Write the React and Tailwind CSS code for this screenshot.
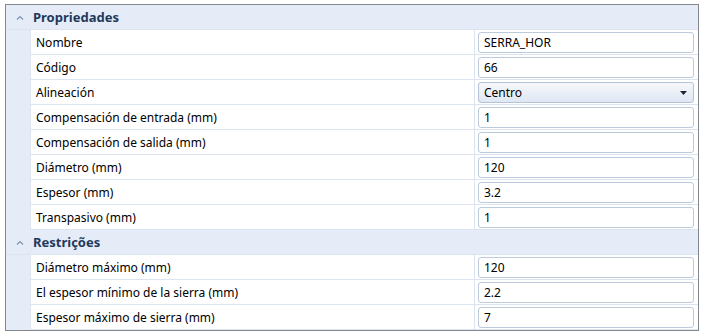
import React from "react";

const sections = [
  {
    title: "Propriedades",
    rows: [
      { label: "Nombre", value: "SERRA_HOR" },
      { label: "Código", value: "66" },
      { label: "Alineación", value: "Centro", select: true },
      { label: "Compensación de entrada (mm)", value: "1" },
      { label: "Compensación de salida (mm)", value: "1" },
      { label: "Diámetro (mm)", value: "120" },
      { label: "Espesor (mm)", value: "3.2" },
      { label: "Transpasivo (mm)", value: "1" },
    ],
  },
  {
    title: "Restrições",
    rows: [
      { label: "Diámetro máximo (mm)", value: "120" },
      { label: "El espesor mínimo de la sierra (mm)", value: "2.2" },
      { label: "Espesor máximo de sierra (mm)", value: "7" },
    ],
  },
];

const Chevron = () => (
  <svg width="8" height="5" viewBox="0 0 8 5" className="block">
    <polyline points="1,4.5 4,1.5 7,4.5" fill="none" stroke="#7f93ad" strokeWidth="1.2" />
  </svg>
);

const Row = ({ label, value, select }) => (
  <div className="flex h-[25px]">
    <div className="w-[24px] shrink-0 bg-[#e5ecf8]" />
    <div className="flex flex-1 border-l border-b border-[#dbe4f0] bg-white">
      <div className="w-[444px] shrink-0 border-r border-[#dbe4f0] pl-[5px] pt-[2px] flex items-center text-black">
        {label}
      </div>
      <div className="flex-1 flex items-center pl-[3px] pr-[4px]">
        {select ? (
          <div className="h-[21px] w-full rounded-[3px] border border-[#b4c3d7] bg-gradient-to-b from-[#f6f8fb] to-[#dfe7f3] flex items-center justify-between pl-[5px] pr-[6px] pt-[1px] text-black">
            <span>{value}</span>
            <svg width="7" height="4" viewBox="0 0 7 4">
              <polygon points="0,0 7,0 3.5,4" fill="#1a2536" />
            </svg>
          </div>
        ) : (
          <div className="h-[21px] w-full rounded-[3px] border border-[#bccadb] bg-white flex items-center pl-[5px] pt-[1px] text-black">
            {value}
          </div>
        )}
      </div>
    </div>
  </div>
);

const App = () => {
  return (
    <div className="w-[703px] h-[336px] bg-white pt-[4px] pl-[5px] text-[12px] font-['Segoe_UI','Noto_Sans',sans-serif]">
      <div className="w-[694px] border border-[#828790] bg-white">
        {sections.map((s) => (
          <div key={s.title}>
            <div className="flex h-[25px] items-center bg-[#e5ecf8] border-b border-[#dbe4f0]">
              <div className="w-[26px] flex justify-center pl-[2px]">
                <Chevron />
              </div>
              <span className="font-bold text-[13px] text-[#1e395b] pl-[1px] pt-[1px]">{s.title}</span>
            </div>
            {s.rows.map((r) => (
              <Row key={r.label} {...r} />
            ))}
          </div>
        ))}
      </div>
    </div>
  );
};

export default App;
